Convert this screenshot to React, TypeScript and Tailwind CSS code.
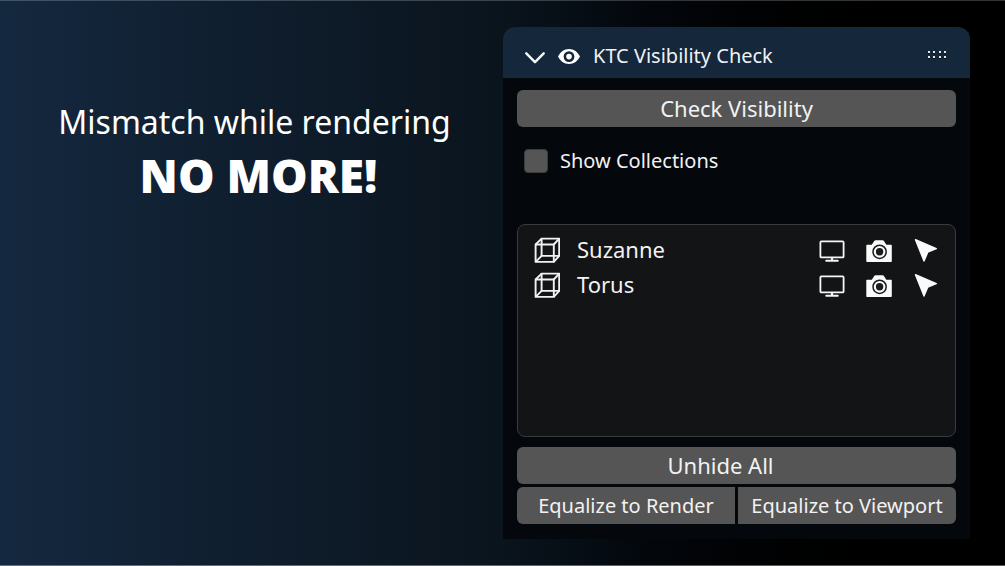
import { useState } from "react";

function ChevronIcon() {
  return (
    <svg className="h-5 w-5" viewBox="0 0 20 20" fill="none" aria-hidden="true">
      <path d="M1.300 7.300 10 16.200l8.700-8.900" stroke="#f4f6f8" strokeWidth="2.400" strokeLinecap="round" strokeLinejoin="round" />
    </svg>
  );
}

function EyeIcon() {
  return (
    <svg className="h-6 w-6" viewBox="0 0 24 24" fill="#ffffff" aria-hidden="true">
      <path
        fillRule="evenodd"
        d="M12 5.100C7 5.100 3.200 8.200 1 12.600c2.200 4.400 6 7.500 11 7.500s8.800-3.100 11-7.500c-2.200-4.400-6-7.500-11-7.500zM12 18a5.400 5.400 0 1 1 0-10.800A5.400 5.400 0 0 1 12 18z"
      />
      <circle cx="12" cy="12.600" r="2.800" />
    </svg>
  );
}

function GripIcon() {
  const columns = [0, 5, 11, 16];
  return (
    <svg className="h-[9px] w-5" viewBox="0 0 20 9" shapeRendering="crispEdges" aria-hidden="true">
      {columns.map((x) => (
        <g key={x}>
          <rect x={x + 1} y="0" width="2" height="2" fill="#e8e8e4" />
          <rect x={x + 1} y="2" width="2" height="1" fill="#0a1420" />
          <rect x={x + 1} y="5" width="2" height="2" fill="#e8e8e4" />
          <rect x={x + 1} y="7" width="2" height="1" fill="#0a1420" />
        </g>
      ))}
    </svg>
  );
}

function MeshIcon() {
  return (
    <svg className="h-[26px] w-[26px]" viewBox="0 0 26 26" fill="none" stroke="#f2f2f2" strokeWidth="1.9" strokeLinejoin="round" aria-hidden="true">
      <path d="M1.600 7.500h18.200v17.400H1.600z" />
      <path d="M7.600 1.600h17.600v17.300H7.600z" />
      <path d="M1.600 7.500l6-5.900M19.800 7.500l5.400-5.900M1.600 24.900l6-6M19.800 24.900l5.400-6" />
    </svg>
  );
}

function MonitorIcon() {
  return (
    <svg className="h-[26px] w-[26px]" viewBox="0 0 26 26" fill="none" stroke="#f5f5f5" aria-hidden="true">
      <rect x="1.400" y="4.400" width="23.200" height="16" rx="1" strokeWidth="1.800" />
      <path d="M13 20.400v2.800" strokeWidth="2.200" />
      <path d="M7.200 23.700h11.600" strokeWidth="1.900" strokeLinecap="round" />
    </svg>
  );
}

function CameraIcon() {
  return (
    <svg className="h-[26px] w-[26px]" viewBox="0 0 26 26" aria-hidden="true">
      <path
        fill="#fafafa"
        d="M9.600 3.200h7c.5 0 .9.200 1.200.600l2.500 3.900h4.500c.6 0 1 .4 1 1V24c0 .6-.4 1-1 1H1.300c-.6 0-1-.4-1-1V8.700c0-.6.4-1 1-1h4.500l2.600-3.900c.3-.4.700-.6 1.200-.6z"
      />
      <circle cx="13.600" cy="14.800" r="6.600" fill="none" stroke="#1a1b1c" strokeWidth="1.500" />
      <circle cx="13.600" cy="14.800" r="3.700" fill="#1a1b1c" />
    </svg>
  );
}

function CursorIcon() {
  return (
    <svg className="h-[26px] w-[26px]" viewBox="0 0 26 26" aria-hidden="true">
      <path d="M2.500 2.700 23.300 11.600l-8.500 3.500-3.800 8.900z" fill="#fafafa" stroke="#fafafa" strokeWidth="1.400" strokeLinejoin="round" />
    </svg>
  );
}

const objects = ["Suzanne", "Torus"];

const buttonBase = "flex h-[37px] items-center justify-center bg-[#555555] text-[#f2f2f2] hover:bg-[#626262]";

export default function App() {
  const [showCollections, setShowCollections] = useState(false);
  const [open, setOpen] = useState(true);

  return (
    <main className="grid min-h-screen grid-cols-[503fr_467fr_35fr] items-start border-t border-b border-t-white/20 border-b-white/35 bg-linear-to-r from-[#14283f] via-[#0a141d] via-50% to-black to-95% font-['Noto_Sans',sans-serif] text-white">
      <header className="pt-[98px] pl-1.5 text-center">
        <h1>
          <span className="block text-[32px] leading-[46px]">Mismatch while rendering</span>
          <strong className="block pl-2 font-['Open_Sans','Noto_Sans',sans-serif] text-[46px] leading-[60px] font-extrabold">NO MORE!</strong>
        </h1>
      </header>

      <section className="mt-[26px] overflow-hidden rounded-t-xl bg-[#04070c]" aria-label="KTC Visibility Check">
        <div className="flex h-[51px] items-center justify-between bg-[#14273b] pt-1.5 pr-[23px] pl-[22px]">
          <button type="button" onClick={() => setOpen(!open)} aria-expanded={open} className="flex items-center gap-3 text-xl text-[#f0f2f4]">
            <ChevronIcon />
            <EyeIcon />
            <span>KTC Visibility Check</span>
          </button>
          <GripIcon />
        </div>

        {open && (
          <div className="px-3.5 pt-3 pb-[15px]">
            <button type="button" className={`${buttonBase} w-full rounded-md text-[22px]`}>
              Check Visibility
            </button>

            <label className="mt-[22px] ml-[7px] flex h-6 w-fit items-center gap-3 text-xl text-[#f2f2f2]">
              <input
                type="checkbox"
                checked={showCollections}
                onChange={(event) => setShowCollections(event.target.checked)}
                className="h-6 w-6 appearance-none rounded-sm border border-[#3c3c3c] bg-[#555555] checked:bg-[#4772b3]"
              />
              Show Collections
            </label>

            <ul className="mt-[51px] min-h-[213px] rounded-lg border border-[#3a3b3c] bg-[#131416] px-4 pt-[7px]">
              {objects.map((name) => (
                <li key={name} className="flex h-[35px] items-center">
                  <MeshIcon />
                  <span className="ml-[17px] flex-1 text-[22px] text-[#f2f2f2]">{name}</span>
                  <span className="flex items-center gap-[21px]">
                    <button type="button" aria-label={`Toggle ${name} in viewport`}>
                      <MonitorIcon />
                    </button>
                    <button type="button" aria-label={`Toggle ${name} in render`}>
                      <CameraIcon />
                    </button>
                    <button type="button" aria-label={`Select ${name}`}>
                      <CursorIcon />
                    </button>
                  </span>
                </li>
              ))}
            </ul>

            <button type="button" className={`${buttonBase} mt-2.5 w-full rounded-md pr-8 text-[22px]`}>
              Unhide All
            </button>
            <div className="mt-[3px] grid grid-cols-2 gap-[3px]">
              <button type="button" className={`${buttonBase} rounded-l-md text-xl`}>
                Equalize to Render
              </button>
              <button type="button" className={`${buttonBase} rounded-r-md text-xl`}>
                Equalize to Viewport
              </button>
            </div>
          </div>
        )}
      </section>
    </main>
  );
}
